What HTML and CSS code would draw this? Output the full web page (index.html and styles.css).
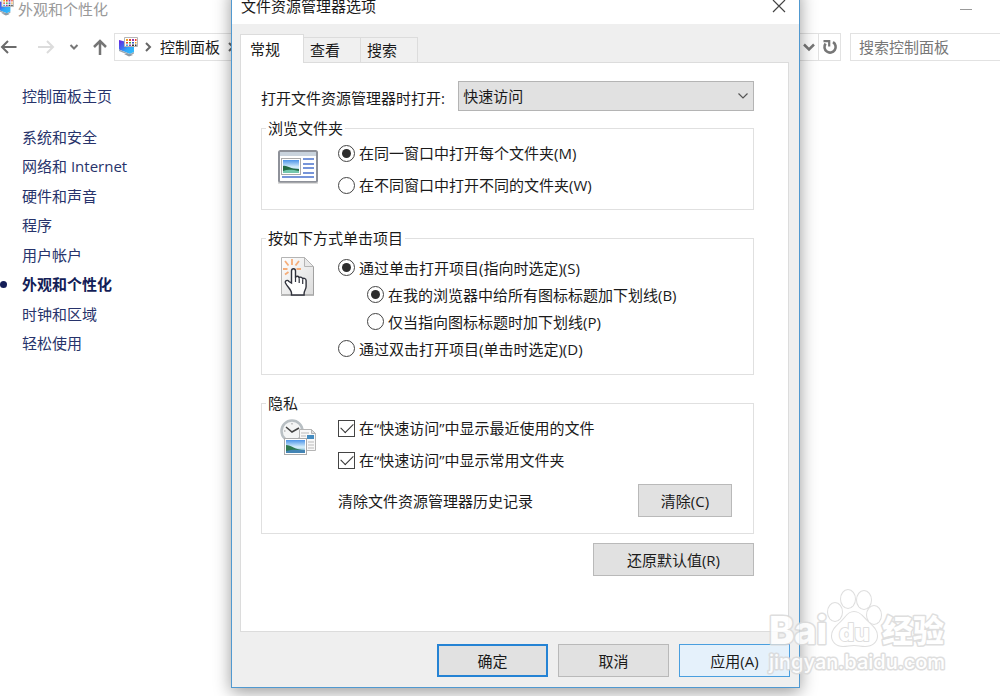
FILE: index.html
```html
<!DOCTYPE html>
<html lang="zh-CN">
<head>
<meta charset="utf-8">
<title>文件资源管理器选项</title>
<link rel="stylesheet" href="styles.css">
</head>
<body>
<svg class="defs" width="0" height="0" aria-hidden="true">
  <defs>
    <linearGradient id="scr" x1="0" y1="0" x2="1" y2="1"><stop offset="0" stop-color="#6a1fe0"/><stop offset=".4" stop-color="#3f6ff0"/><stop offset=".6" stop-color="#2fa8fa"/><stop offset="1" stop-color="#35c0fa"/></linearGradient>
    <linearGradient id="sky" x1="0" y1="0" x2="0" y2="1"><stop offset="0" stop-color="#4a93e8"/><stop offset=".55" stop-color="#d8f0fa"/><stop offset="1" stop-color="#5d9fd0"/></linearGradient>
    <linearGradient id="paper" x1="0" y1="0" x2="1" y2="1"><stop offset="0" stop-color="#ffffff"/><stop offset="1" stop-color="#dcdcdc"/></linearGradient>
    <symbol id="panel-icon" viewBox="0 0 20 20">
      <path d="M1 3l15 4v8L12 17 1 12.500z" fill="url(#scr)"/>
      <path d="M1 12.500 12 17l4-2v1.500L12 18.500 1 14z" fill="#9aa6b0"/>
      <path d="M6 17l5 2.500 4-1.500-3-1z" fill="#8d9aa5"/>
      <path d="M6.500.500h13v9h-13z" fill="#fff" stroke="#b5b5b5"/>
      <path d="M8 2h2v2H8z" fill="#f0a020"/><path d="M11 2h2v2h-2z" fill="#e8482c"/><path d="M14 2h2v2h-2z" fill="#9338b0"/><path d="M17 2h1.500v2H17z" fill="#e8482c"/>
      <path d="M8 5h2v1.500H8z" fill="#e8482c"/><path d="M11 5h2v1.500h-2z" fill="#48a83c"/><path d="M14 5h2v1.500h-2z" fill="#3557c8"/><path d="M17 5h1.500v1.500H17z" fill="#f0a020"/>
      <path d="M8 7.500h2V9H8z" fill="#49a2e0"/><path d="M11 7.500h2V9h-2z" fill="#9338b0"/><path d="M14 7.500h2V9h-2zM17 7.500h1.500V9H17z" fill="#333"/>
    </symbol>
  </defs>
</svg>

<main class="window">
  <header class="window-title">
    <svg class="title-icon" width="18" height="20"><use href="#panel-icon" width="18" height="20"/></svg>
    <span class="window-name">外观和个性化</span>
    <button class="minimize" aria-label="最小化"></button>
  </header>
  <nav class="navbar">
    <button class="icon-btn back" aria-label="后退"><svg width="18" height="18" viewBox="0 0 18 18"><path d="M16.500 9H2M8 3 2 9l6 6" fill="none" stroke="#6b6b6b" stroke-width="2"/></svg></button>
    <button class="icon-btn forward" aria-label="前进"><svg width="18" height="18" viewBox="0 0 18 18"><path d="M1 9h15M10 3l6 6-6 6" fill="none" stroke="#dcdcdc" stroke-width="2"/></svg></button>
    <button class="icon-btn recent" aria-label="最近位置"><svg width="10" height="8" viewBox="0 0 10 8"><path d="m1.500 2 3.500 3.500L8.500 2" fill="none" stroke="#777" stroke-width="2"/></svg></button>
    <button class="icon-btn up" aria-label="向上"><svg width="16" height="18" viewBox="0 0 16 18"><path d="M8 17V3M2 9l6-6 6 6" fill="none" stroke="#757575" stroke-width="2.500"/></svg></button>
    <div class="address">
      <svg width="20" height="20"><use href="#panel-icon" width="20" height="20"/></svg>
      <svg class="crumb-arrow" width="8" height="12" viewBox="0 0 8 12"><path d="m2 2 4 4-4 4" fill="none" stroke="#666" stroke-width="2"/></svg>
      <a class="crumb" href="#">控制面板</a>
      <svg class="crumb-arrow" width="8" height="12" viewBox="0 0 8 12"><path d="m2 2 4 4-4 4" fill="none" stroke="#666" stroke-width="2"/></svg>
      <button class="icon-btn history" aria-label="历史"><svg width="12" height="10" viewBox="0 0 12 10"><path d="m1 2.500 5 5 5-5" fill="none" stroke="#777" stroke-width="2.500"/></svg></button>
      <button class="icon-btn refresh" aria-label="刷新"><svg width="16" height="16" viewBox="0 0 16 16"><path d="M11 3.200A5.600 5.600 0 1 1 3.600 4.600" fill="none" stroke="#777" stroke-width="2.600"/><path d="M1.500 2.200h5.700v5.300" fill="none" stroke="#777" stroke-width="2.200"/></svg></button>
    </div>
    <input class="search" type="text" placeholder="搜索控制面板" aria-label="搜索控制面板">
  </nav>
  <aside class="sidebar">
    <a class="home" href="#">控制面板主页</a>
    <ul class="categories">
      <li><a href="#">系统和安全</a></li>
      <li><a href="#">网络和 Internet</a></li>
      <li><a href="#">硬件和声音</a></li>
      <li><a href="#">程序</a></li>
      <li><a href="#">用户帐户</a></li>
      <li class="current"><a href="#">外观和个性化</a></li>
      <li><a href="#">时钟和区域</a></li>
      <li><a href="#">轻松使用</a></li>
    </ul>
  </aside>
</main>

<section class="dialog" role="dialog" aria-labelledby="dialog-title">
  <header class="dialog-title">
    <span id="dialog-title">文件资源管理器选项</span>
    <button class="icon-btn close" aria-label="关闭"><svg width="14" height="14" viewBox="0 0 14 14"><path d="m1 1 12 12M13 1 1 13" fill="none" stroke="#444" stroke-width="1.200"/></svg></button>
  </header>
  <div class="dialog-body">
    <div class="tabs" role="tablist">
      <button class="tab active" role="tab" aria-selected="true">常规</button>
      <button class="tab" role="tab">查看</button>
      <button class="tab" role="tab">搜索</button>
    </div>
    <form class="panel">
      <div class="open-row">
        <label for="open-to">打开文件资源管理器时打开:</label>
        <div class="select-wrap">
          <select id="open-to"><option>快速访问</option></select>
          <svg class="select-arrow" width="12" height="8" viewBox="0 0 12 8"><path d="m1.500 1.500 4.500 4.500 4.500-4.500" fill="none" stroke="#555" stroke-width="1.200"/></svg>
        </div>
      </div>

      <fieldset>
        <legend>浏览文件夹</legend>
        <div class="group">
          <svg class="group-icon" width="40" height="34" viewBox="0 0 40 34">
            <rect x="1" y="1" width="38" height="31" rx="1.500" fill="#fff" stroke="#8e9199" stroke-width="2"/>
            <path d="M2 2h36v4H2z" fill="#c9d3dd"/><path d="M0 33h40" stroke="#bbb"/>
            <rect x="3.500" y="8.500" width="19" height="16" fill="#fff" stroke="#aaa"/>
            <path d="M5 10h16v13H5z" fill="url(#sky)"/><path d="M5 16c4-1 6 3 16 3v2H5z" fill="#226a43"/><path d="M5 21c5-2 10-1 16 0v2H5z" fill="#74c7ad"/>
            <path d="M25 9h11M25 14h11M25 18h11M25 23h11M4 27h32" stroke="#4b73cd" stroke-width="1.500"/>
          </svg>
          <div class="options">
            <label class="option"><input type="radio" name="browse" checked>在同一窗口中打开每个文件夹(M)</label>
            <label class="option"><input type="radio" name="browse">在不同窗口中打开不同的文件夹(W)</label>
          </div>
        </div>
      </fieldset>

      <fieldset>
        <legend>按如下方式单击项目</legend>
        <div class="group click-group">
          <svg class="group-icon" width="40" height="40" viewBox="0 0 40 40">
            <path d="M3.500.5h23l9 9v28h-32z" fill="url(#paper)" stroke="#b4b4b4"/>
            <path d="M3 38.500h33M35.500 10v28" stroke="#999" opacity=".7"/>
            <path d="M26.500.5v9h9z" fill="#e9e9e9" stroke="#b4b4b4"/>
            <path d="M14 8V2M10.500 8.500 7 4M17.500 8.500 21 4M9.500 12H5M18.500 12H23M10.500 15 7 17.500" stroke="#f5ad79" stroke-width="1.800"/>
            <path d="M13.500 26V14c0-3 4-3 4 0v7c0-2.500 3.700-2.500 3.700.500 0-2 3.500-2 3.500 1 0-2 3.400-1.500 3.400 1v6c0 3-2 4-2 7v1.500H13.500V36c0-3-4-6-6-10-1-2.500 2-3.500 3.500-1.500z" fill="#fff" stroke="#30323c" stroke-width="1.400"/>
            <path d="M17.500 21v4M21.200 21.500V26M24.700 22.500V27" stroke="#30323c" stroke-width="1.200"/>
          </svg>
          <div class="options">
            <label class="option"><input type="radio" name="click" checked>通过单击打开项目(指向时选定)(S)</label>
            <label class="option nested"><input type="radio" name="underline" checked>在我的浏览器中给所有图标标题加下划线(B)</label>
            <label class="option nested"><input type="radio" name="underline">仅当指向图标标题时加下划线(P)</label>
            <label class="option"><input type="radio" name="click">通过双击打开项目(单击时选定)(D)</label>
          </div>
        </div>
      </fieldset>

      <fieldset>
        <legend>隐私</legend>
        <div class="group privacy-group">
          <svg class="group-icon" width="40" height="38" viewBox="0 0 40 38">
            <circle cx="14" cy="12" r="10.500" fill="#f4f5f5" stroke="#b8bfc3" stroke-width="2.500"/>
            <path d="m8 8 6 5 7-4" fill="none" stroke="#444" stroke-width="1.500"/><path d="M14 4v1.500M6 12h1.500M14 19v1.500" stroke="#999"/>
            <path d="M21.500 10.500h12l4 4v17h-16z" fill="#f8f8f8" stroke="#b5b5b5"/><path d="M33.500 10.500v4h4z" fill="#ddd" stroke="#b5b5b5"/>
            <path d="M23 14h8M23 17h5M30 23h6M30 26h6M30 29h6" stroke="#bbb"/><path d="M29 16h7v4h-7z" fill="#458cc0"/>
            <rect x="6.500" y="19.500" width="22" height="16" fill="#fff" stroke="#aaa"/>
            <path d="M8 21h19v13H8z" fill="url(#sky)"/><path d="M8 26c5 0 9 5 19 5v1H8z" fill="#2f7950"/><path d="M8 32c7-2 12-1 19-1v3H8z" fill="#4384b4"/>
          </svg>
          <div class="options">
            <label class="option"><input type="checkbox" checked>在“快速访问”中显示最近使用的文件</label>
            <label class="option"><input type="checkbox" checked>在“快速访问”中显示常用文件夹</label>
            <div class="clear-row"><span>清除文件资源管理器历史记录</span><button class="btn clear" type="button">清除(C)</button></div>
          </div>
        </div>
      </fieldset>
      <button class="btn restore" type="button">还原默认值(R)</button>
    </form>
    <footer class="actions">
      <button class="btn default">确定</button>
      <button class="btn">取消</button>
      <button class="btn hover">应用(A)</button>
    </footer>
  </div>
</section>

<svg class="watermark" width="184" height="92" viewBox="0 0 184 92" role="img" aria-label="Baidu 经验">
  <g fill="#fff" stroke="#d9d9d9" stroke-width="3" stroke-linejoin="round" paint-order="stroke" opacity=".85">
    <text class="wm-brand" x="3" y="56">Bai</text>
    <g stroke-width="2">
      <ellipse cx="69" cy="24" rx="7" ry="9"/><ellipse cx="82" cy="11" rx="7" ry="9"/><ellipse cx="98" cy="12" rx="7" ry="9"/><ellipse cx="108" cy="27" rx="7" ry="9"/>
      <path d="M88 24c-6 0-8 5-12 9s-10 8-10 15c0 6 5 10 11 10 4 0 7-1 11-1s7 1 11 1c7 0 12-4 12-10 0-7-6-11-10-15s-7-9-13-9z"/>
      <text class="wm-du" x="73" y="53">du</text>
    </g>
    <text class="wm-cn" x="116" y="54">经验</text>
    <text class="wm-url" x="3" y="81">jingyan.baidu.com</text>
  </g>
</svg>
</body>
</html>
```
FILE: styles.css
```css
* { box-sizing: border-box; }

body {
  margin: 0;
  min-height: 100vh;
  overflow: hidden;
  position: relative;
  background: #fff;
  color: #1a1a1a;
  font: 15px/20px "Open Sans", "Noto Sans CJK SC", sans-serif;
}

button, input, select { font: inherit; color: inherit; }
a { color: inherit; text-decoration: none; }
svg { display: block; flex: none; }
.defs { position: absolute; }

.icon-btn {
  display: flex;
  align-items: center;
  justify-content: center;
  padding: 0;
  border: 0;
  background: none;
}

/* Control panel window */
.window-title {
  display: flex;
  align-items: center;
  height: 18px;
  padding-right: 28px;
  color: #999;
}
.title-icon { margin: -4px 4px 0 -4px; }
.window-name { flex: 1; }
.minimize {
  width: 12px;
  height: 1px;
  padding: 0;
  border: 0;
  background: #999;
}

.navbar { display: flex; align-items: center; padding-top: 15px; }
.forward { margin-left: 19px; }
.recent { margin-left: 14px; }
.up { margin: 0 6px 0 13px; }
.address {
  display: flex;
  align-items: center;
  flex: 1;
  height: 28px;
  padding-left: 3px;
  border: 1px solid #e2e2e2;
}
.crumb-arrow { margin: 0 6px; }
.crumb { margin: 0 1px 0 2px; }
.history { margin-left: auto; padding: 0 3px; }
.refresh {
  align-self: stretch;
  width: 22px;
  border-left: 1px solid #e2e2e2;
}
.search {
  width: 150px;
  height: 28px;
  margin-left: 9px;
  padding: 0 8px;
  border: 1px solid #e2e2e2;
  border-right: 0;
  border-radius: 0;
}
.search::placeholder { color: #777; opacity: 1; }

.sidebar { padding: 25px 0 0 22px; color: #27336b; }
.home { display: block; }
.categories {
  display: grid;
  grid-auto-rows: 1fr;
  align-items: center;
  height: 236px;
  margin: 16px 0 0;
  padding: 0;
  list-style: none;
}
.current {
  display: flex;
  align-items: center;
  margin-left: -22px;
  color: #131d57;
  font-weight: 700;
}
.current::before {
  content: "";
  width: 7px;
  height: 7px;
  margin-right: 15px;
  border-radius: 50%;
  background: #131d57;
}

/* Options dialog */
.dialog {
  position: absolute;
  top: -13px;
  left: 231px;
  width: 569px;
  border: 1px solid #5199d0;
  background: #efefef;
  box-shadow: 0 4px 16px rgba(0, 0, 0, .4);
}
.dialog-title {
  display: flex;
  align-items: center;
  justify-content: space-between;
  height: 36px;
  padding: 0 13px 0 9px;
  background: #fff;
}
.dialog-body { padding: 10px 9px 10px 8px; }

.tabs { display: flex; align-items: flex-end; }
.tab {
  width: 57px;
  height: 25px;
  padding: 0 14px 0 0;
  border: 1px solid #dcdcdc;
  border-width: 1px 1px 0 0;
  background: #f0f0f0;
}
.tab.active {
  z-index: 1;
  width: 64px;
  height: 29px;
  margin-bottom: -1px;
  border-left-width: 1px;
  background: #fff;
}

.panel {
  display: flex;
  flex-direction: column;
  margin-right: 1px;
  padding: 18px 34px 55px 20px;
  border: 1px solid #dcdcdc;
  background: #fff;
}
.open-row {
  display: flex;
  align-items: center;
  justify-content: space-between;
  margin-bottom: 8px;
}
.open-row label { padding-top: 4px; }
.select-wrap { position: relative; width: 60%; }
.select-wrap select {
  display: block;
  width: 100%;
  height: 30px;
  padding: 0 4px;
  border: 1px solid #b4b4b4;
  border-radius: 0;
  background: #e1e1e1;
  appearance: none;
}
.select-arrow { position: absolute; top: 11px; right: 5px; pointer-events: none; }

fieldset {
  min-width: 0;
  margin: 0 0 19px;
  padding: 0;
  border: 1px solid #e0e0e0;
}
fieldset:last-of-type { margin-bottom: 9px; }
legend { margin-left: 4px; padding: 0 2px; line-height: 18px; }
.group { display: flex; padding: 0 21px 8px 16px; }
.group-icon { margin: 13px 20px 0 0; }
.options { flex: 1; }
.option { display: flex; align-items: center; gap: 4px; height: 32px; }
.click-group { padding-top: 7px; padding-bottom: 12px; }
.click-group .option { height: 27px; }
.click-group .group-icon { margin-top: 3px; }
.nested { margin-left: 29px; }
.privacy-group { padding-bottom: 16px; }
.privacy-group .group-icon { margin-top: 7px; }

input[type="radio"], input[type="checkbox"] {
  display: grid;
  place-items: center;
  flex: none;
  width: 17px;
  height: 17px;
  margin: 0;
  border: 1px solid #444;
  background: #fff;
  appearance: none;
}
input[type="radio"] { border-radius: 50%; }
input[type="radio"]:checked::before {
  content: "";
  width: 9px;
  height: 9px;
  border-radius: 50%;
  background: #2d2d2d;
}
input[type="checkbox"]:checked::before {
  content: "";
  width: 11px;
  height: 6px;
  margin-bottom: 4px;
  border: solid #333;
  border-width: 0 0 1px 1px;
  transform: rotate(-45deg);
}

.clear-row {
  display: flex;
  align-items: center;
  justify-content: space-between;
  margin-top: 8px;
}
.btn {
  width: 111px;
  height: 33px;
  padding: 0;
  border: 1px solid #b9b9b9;
  background: #e1e1e1;
}
.btn.clear { width: 94px; }
.btn.restore { align-self: flex-end; width: 161px; }
.btn.default { border: 2px solid #2583d4; }
.btn.hover { border-color: #4a9fdf; background: #e5f1fb; }
.actions {
  display: flex;
  justify-content: flex-end;
  gap: 10px;
  padding-top: 12px;
}

.watermark {
  position: absolute;
  top: 588px;
  left: 766px;
  pointer-events: none;
  font-family: Inter, "Noto Sans CJK SC", sans-serif;
  font-weight: 800;
}
.wm-brand { font-size: 38px; }
.wm-du { font-size: 24px; }
.wm-cn { font-size: 31px; }
.wm-url { font-size: 20px; font-weight: 500; }
```
